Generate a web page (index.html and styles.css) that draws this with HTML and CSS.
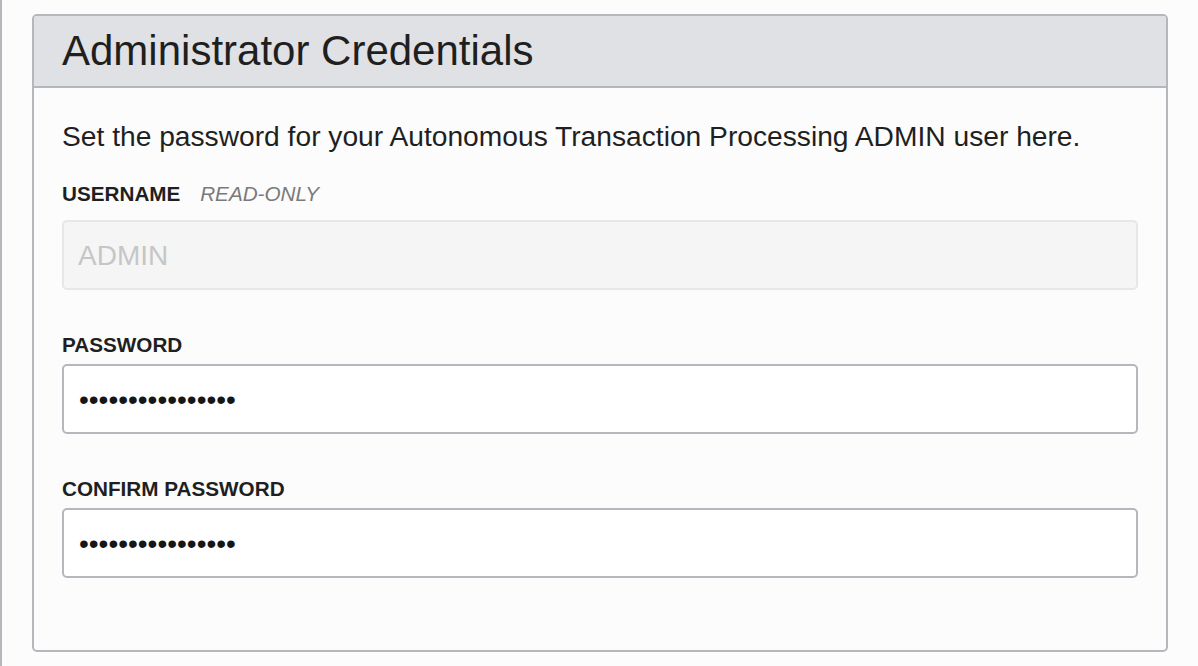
FILE: index.html
```html
<!DOCTYPE html>
<html lang="en">
<head>
    <meta charset="UTF-8">
    <title>Administrator Credentials</title>
    <link rel="stylesheet" href="styles.css">
</head>
<body>
<div class="page">
    <!--管理员凭据-->
    <div class="panel">
        <div class="panel-hd">
            <h2>Administrator Credentials</h2>
        </div>
        <div class="panel-bd">
            <p class="desc">Set the password for your Autonomous Transaction Processing ADMIN user here.</p>
            <div class="field field-ro">
                <label class="lbl">USERNAME <span class="hint">READ-ONLY</span></label>
                <input class="ipt ipt-ro" type="text" value="ADMIN" readonly>
            </div>
            <div class="field">
                <label class="lbl">PASSWORD</label>
                <input class="ipt" type="password" value="abcdefghijklmnop">
            </div>
            <div class="field">
                <label class="lbl">CONFIRM PASSWORD</label>
                <input class="ipt" type="password" value="abcdefghijklmnop">
            </div>
        </div>
    </div>
</div>
</body>
</html>
```

FILE: styles.css
```css
*{margin:0;padding:0;box-sizing:border-box;font-family:"Liberation Sans",Arial,sans-serif;}
html,body{height:100%;background:#fcfcfc;}
.page{
    min-height:100%;
    border-left:2px solid #b4b7bc;
    padding:14px 30px 0 30px;
}
.panel{
    border:2px solid #b4b7bc;
    border-radius:5px;
    background:#fcfcfc;
    overflow:hidden;
}
.panel-hd{
    height:72px;
    background:#e0e1e5;
    border-bottom:2px solid #b4b7bc;
    padding:0 28px;
    display:flex;
    align-items:center;
}
.panel-hd h2{
    font-size:42px;
    font-weight:normal;
    color:#1f1f1f;
    line-height:1;
}
.panel-bd{
    padding:28px 28px 72px 28px;
}
.desc{
    font-size:28.2px;
    line-height:40px;
    color:#1f1f1f;
}
.field{
    margin-top:43px;
}
.field-ro{
    margin-top:26px;
}
.lbl{
    display:block;
    font-size:20.7px;
    line-height:24px;
    font-weight:bold;
    color:#1f1f1f;
    margin-bottom:7px;
}
.field-ro .lbl{
    margin-bottom:14px;
}
.hint{
    font-weight:normal;
    font-style:italic;
    color:#7a7a7a;
    margin-left:14px;
}
.ipt{
    display:block;
    width:100%;
    height:70px;
    padding:2px 15px 0 15px;
    font-size:28px;
    color:#161616;
    background:#fff;
    border:2px solid #b4b7bc;
    border-radius:5px;
    outline:none;
}
.ipt-ro{
    padding-left:14px;
    background:#f5f5f6;
    border-color:#e6e7ea;
    color:#c6c6c6;
}
```
